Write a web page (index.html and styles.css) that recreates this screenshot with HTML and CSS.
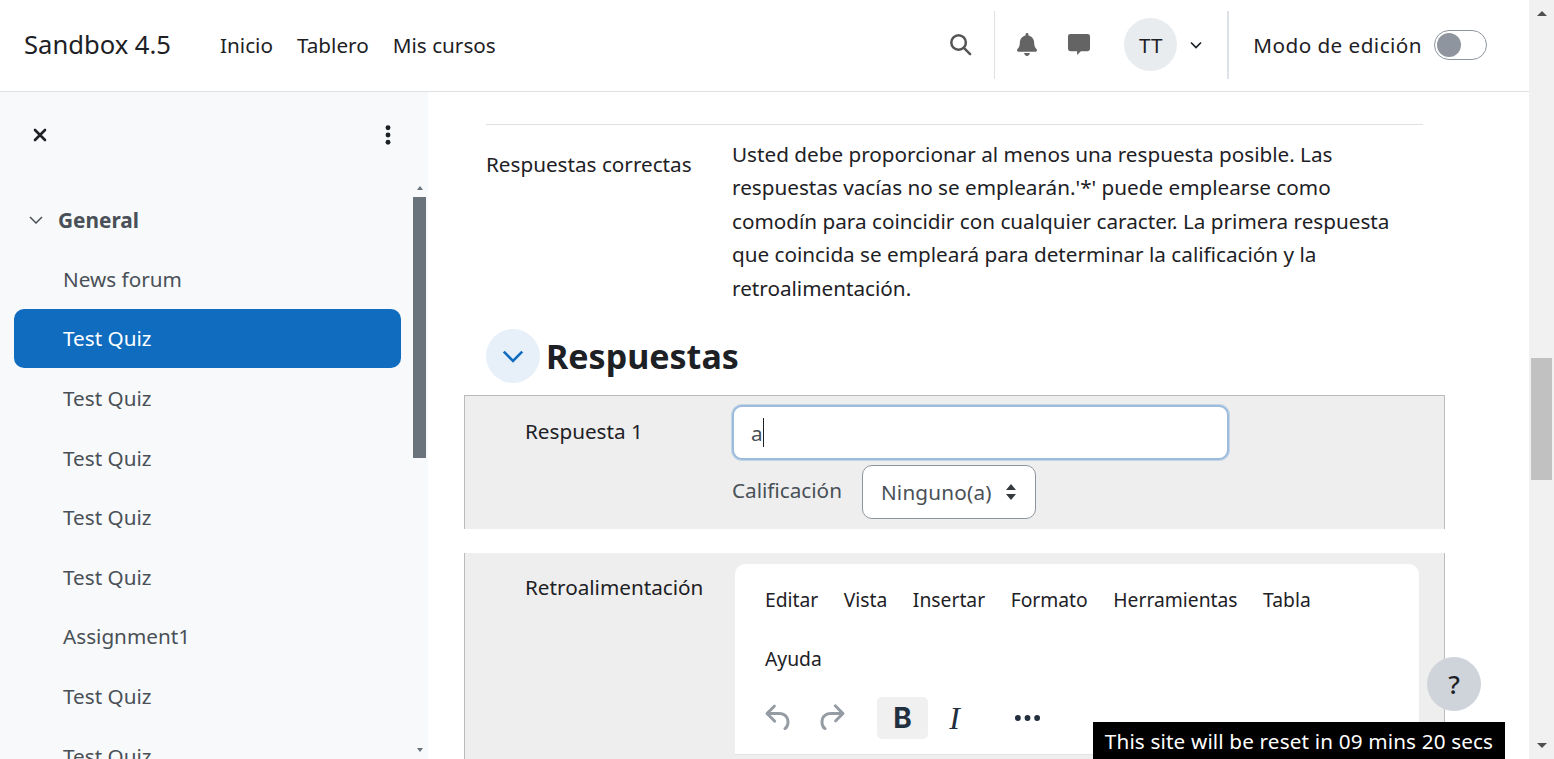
FILE: index.html
```html
<!doctype html>
<html lang="es">
 <head>
  <meta charset="UTF-8">
  <meta name="viewport" content="width=device-width, initial-scale=1.0">
  <title>Sandbox 4.5</title>
  <link rel="stylesheet" href="styles.css">
 </head>
 <body>
  <div class="page">
   <header class="topbar">
    <div class="brand">Sandbox 4.5</div>
    <nav class="mainnav">
     <a>Inicio</a>
     <a>Tablero</a>
     <a>Mis cursos</a>
    </nav>
    <div class="topbar-right">
     <svg class="icon-search" viewBox="0 0 24 24" fill="none" stroke="#555" stroke-width="2.6"><circle cx="10" cy="10" r="7.6"/><path d="M15.5 15.5 22 22" stroke-linecap="round"/></svg>
     <div class="divider first"></div>
     <svg class="icon-bell" viewBox="0 0 448 512" fill="#646464"><path d="M224 512c35.32 0 63.97-28.65 63.97-64H160.03c0 35.35 28.65 64 63.97 64zm215.39-149.71c-19.32-20.76-55.47-51.99-55.47-154.29 0-77.7-54.48-139.9-127.94-155.16V32c0-17.67-14.32-32-31.98-32s-31.98 14.33-31.98 32v20.84C118.56 68.1 64.08 130.3 64.08 208c0 102.3-36.15 133.53-55.47 154.29-6 6.45-8.66 14.16-8.61 21.71.11 16.4 12.98 32 32.1 32h383.8c19.12 0 32-15.6 32.1-32 .05-7.55-2.61-15.27-8.61-21.71z"/></svg>
     <svg class="icon-chat" viewBox="0 0 24 24" fill="#646464"><path d="M3 1h18a2.5 2.5 0 0 1 2.500 2.500v13a2.500 2.500 0 0 1-2.500 2.500h-7l-4 4v-4H3a2.500 2.500 0 0 1-2.500-2.500v-13A2.500 2.500 0 0 1 3 1z"/></svg>
     <div class="avatar">TT</div>
     <svg class="icon-caret" viewBox="0 0 12 8" fill="none" stroke="#1d2125" stroke-width="1.700"><path d="M1 1.500 6 6.500l5-5"/></svg>
     <div class="divider second"></div>
     <span class="edit-label">Modo de edición</span>
     <div class="toggle"><div class="knob"></div></div>
    </div>
   </header>

   <div class="body-row">
    <aside class="drawer">
     <div class="drawer-head">
      <svg class="icon-close" viewBox="0 0 14 14" stroke="#1d2125" stroke-width="2.600" stroke-linecap="round"><path d="M2 2l10 10M12 2 2 12"/></svg>
      <svg class="icon-dots" viewBox="0 0 6 22" fill="#1d2125"><circle cx="3" cy="3" r="2.700"/><circle cx="3" cy="11" r="2.700"/><circle cx="3" cy="19" r="2.700"/></svg>
     </div>
     <div class="drawer-body">
      <div class="course-list">
       <div class="section-title">
        <svg class="icon-sec" viewBox="0 0 14 8" fill="none" stroke="#495057" stroke-width="1.500"><path d="M1 1l6 6 6-6"/></svg>
        General
       </div>
       <div class="course-item">News forum</div>
       <div class="course-item active">Test Quiz</div>
       <div class="course-item">Test Quiz</div>
       <div class="course-item">Test Quiz</div>
       <div class="course-item">Test Quiz</div>
       <div class="course-item">Test Quiz</div>
       <div class="course-item">Assignment1</div>
       <div class="course-item">Test Quiz</div>
       <div class="course-item">Test Quiz</div>
      </div>
      <div class="drawer-scroll">
       <div class="arrow-up small"></div>
       <div class="drawer-thumb"></div>
       <div class="arrow-down small"></div>
      </div>
     </div>
    </aside>

    <main class="content">
     <hr class="rule">
     <div class="form-row info">
      <div class="form-label">Respuestas correctas</div>
      <div class="form-text">Usted debe proporcionar al menos una respuesta posible. Las respuestas vacías no se emplearán.'*' puede emplearse como comodín para coincidir con cualquier caracter. La primera respuesta que coincida se empleará para determinar la calificación y la retroalimentación.</div>
     </div>
     <div class="section-head">
      <div class="collapse-btn">
       <svg viewBox="0 0 20 12" fill="none" stroke="#0f6cbf" stroke-width="2.400"><path d="M1.500 1.500 10 10l8.500-8.500"/></svg>
      </div>
      <h2>Respuestas</h2>
     </div>
     <div class="answer-box first-box">
      <div class="box-label">Respuesta 1</div>
      <div class="box-field">
       <div class="text-input"><span>a</span><span class="caret"></span></div>
       <div class="grade-row">
        <span class="grade-label">Calificación</span>
        <div class="select-box">Ninguno(a)
         <svg viewBox="0 0 12 18" fill="#343a40"><path d="M6 1l5 6H1zM6 17l5-6H1z"/></svg>
        </div>
       </div>
      </div>
     </div>
     <div class="answer-box second-box">
      <div class="box-label">Retroalimentación</div>
      <div class="editor">
       <div class="editor-menu">
        <span>Editar</span><span>Vista</span><span>Insertar</span><span>Formato</span><span>Herramientas</span><span>Tabla</span><span>Ayuda</span>
       </div>
       <div class="editor-tools">
        <svg class="tool-svg" viewBox="0 0 24 24" fill="#969ca3"><path d="M6.400 8H12c3.700 0 6.200 2 6.800 5.100.6 2.700-.4 5.600-2.300 6.800a1 1 0 0 1-1-1.800c1.100-.6 1.800-2.700 1.400-4.600-.5-2.100-2.100-3.500-4.900-3.500H6.400l3.300 3.300a1 1 0 1 1-1.400 1.400l-5-5a1 1 0 0 1 0-1.400l5-5a1 1 0 0 1 1.400 1.400L6.400 8Z"/></svg>
        <svg class="tool-svg" viewBox="0 0 24 24" fill="#969ca3"><path d="M17.600 10H12c-2.800 0-4.400 1.400-4.900 3.500-.4 2 .3 4 1.400 4.600a1 1 0 1 1-1 1.800c-2-1.200-2.900-4.100-2.300-6.800.6-3 3-5.100 6.800-5.100h5.600l-3.300-3.300a1 1 0 1 1 1.400-1.400l5 5a1 1 0 0 1 0 1.400l-5 5a1 1 0 0 1-1.400-1.400l3.300-3.300Z"/></svg>
        <div class="tool-btn bold">B</div>
        <div class="tool-btn italic">I</div>
        <svg class="tool-more" viewBox="0 0 26 6" fill="#222f3e"><circle cx="3" cy="3" r="3"/><circle cx="13" cy="3" r="3"/><circle cx="23" cy="3" r="3"/></svg>
       </div>
      </div>
     </div>
    </main>
   </div>
  </div>

  <div class="page-scroll">
   <div class="arrow-up"></div>
   <div class="page-thumb"></div>
   <div class="arrow-down"></div>
  </div>

  <div class="help-btn">?</div>
  <div class="reset-timer">This site will be reset in 09 mins 20 secs</div>
 </body>
</html>
```

FILE: styles.css
```css
html, body {
  margin: 0;
  height: 100%;
  overflow: hidden;
}
body {
  display: flex;
  font-family: "Noto Sans", "Open Sans", sans-serif;
  font-size: 20.700px;
  color: #1d2125;
  background: #fff;
}
.page {
  width: 1529px;
  height: 759px;
  display: flex;
  flex-direction: column;
  overflow: hidden;
}

/* top bar */
.topbar {
  height: 89px;
  flex: none;
  display: flex;
  align-items: center;
  border-bottom: 1px solid #dee2e6;
  padding: 0 0 2px 24px;
}
.brand {
  font-size: 25.600px;
  width: 196px;
}
.mainnav {
  display: flex;
  gap: 24px;
}
.topbar-right {
  margin-left: auto;
  display: flex;
  align-items: center;
  padding-right: 42px;
}
.icon-search {
  width: 23px;
  height: 23px;
}
.divider {
  width: 1px;
  height: 68px;
  background: #dee2e6;
  margin-left: 22px;
}
.divider.second {
  width: 2px;
  margin-left: 25px;
}
.icon-bell {
  width: 20px;
  height: 23px;
  margin-left: 22px;
}
.icon-chat {
  width: 24px;
  height: 23px;
  margin-left: 30px;
}
.avatar {
  width: 53px;
  height: 53px;
  border-radius: 50%;
  background: #e9ecef;
  display: flex;
  align-items: center;
  justify-content: center;
  margin-left: 33px;
}
.icon-caret {
  width: 12px;
  height: 8px;
  margin-left: 13px;
}
.edit-label {
  margin-left: 24px;
  letter-spacing: .45px;
}
.toggle {
  width: 53px;
  height: 30px;
  box-sizing: border-box;
  border: 1px solid #8f959e;
  border-radius: 15px;
  margin-left: 12px;
  padding: 2px;
}
.knob {
  width: 24px;
  height: 24px;
  border-radius: 50%;
  background: #8f959e;
}

/* left drawer */
.body-row {
  flex: 1;
  display: flex;
  min-height: 0;
}
.drawer {
  width: 428px;
  flex: none;
  background: #f8f9fa;
  display: flex;
  flex-direction: column;
}
.drawer-head {
  height: 86px;
  flex: none;
  display: flex;
  align-items: center;
  justify-content: space-between;
  padding: 0 37px 0 33px;
}
.icon-close {
  width: 14px;
  height: 14px;
}
.icon-dots {
  width: 6px;
  height: 20px;
}
.drawer-body {
  flex: 1;
  display: flex;
  min-height: 0;
}
.course-list {
  width: 387px;
  margin-left: 14px;
  overflow: hidden;
  padding-top: 22px;
}
.section-title {
  height: 39px;
  display: flex;
  align-items: center;
  font-weight: 700;
  color: #495057;
  font-size: 20.800px;
}
.icon-sec {
  width: 14px;
  height: 8px;
  margin: 0 15px;
}
.course-item {
  height: 59.600px;
  display: flex;
  align-items: center;
  padding-left: 49px;
  color: #495057;
  border-radius: 10px;
}
.course-item:nth-child(2) {
  margin-top: 10px;
}
.course-item.active {
  background: #0f6cbf;
  color: #fff;
}
.drawer-scroll {
  width: 13px;
  margin-left: 12px;
  display: flex;
  flex-direction: column;
  align-items: center;
  padding-top: 8px;
}
.drawer-thumb {
  width: 13px;
  height: 261px;
  background: #6a737b;
  margin-top: 7px;
}
.arrow-up, .arrow-down {
  width: 0;
  height: 0;
  border-left: 5px solid transparent;
  border-right: 5px solid transparent;
}
.arrow-up {
  border-bottom: 5px solid #505050;
}
.arrow-down {
  border-top: 5px solid #505050;
}
.arrow-up.small {
  border-left-width: 3.500px;
  border-right-width: 3.500px;
  border-bottom: 4px solid #6a737b;
}
.arrow-down.small {
  border-left-width: 3.500px;
  border-right-width: 3.500px;
  border-top: 4px solid #6a737b;
  margin-top: 290px;
}

/* main region */
.content {
  flex: 1;
  min-width: 0;
  padding: 32px 106px 0 58px;
  overflow: hidden;
}
.rule {
  margin: 0;
  border: 0;
  border-top: 1px solid #dee2e6;
}
.form-row.info {
  display: flex;
  padding-top: 13px;
}
.form-label {
  width: 246px;
  flex: none;
  padding-top: 11px;
  line-height: 30px;
}
.form-text {
  width: 680px;
  line-height: 33.400px;
}
.section-head {
  display: flex;
  align-items: center;
  margin-top: 24px;
  gap: 6px;
}
.collapse-btn {
  width: 54px;
  height: 54px;
  border-radius: 50%;
  background: #e7f0f9;
  display: flex;
  align-items: center;
  justify-content: center;
}
.collapse-btn svg {
  width: 22px;
  height: 13px;
}
.section-head h2 {
  margin: 0;
  font-size: 34px;
  font-weight: 700;
  line-height: 54px;
}
.answer-box {
  display: flex;
  width: 981px;
  margin-left: -22px;
  box-sizing: border-box;
  background: #eee;
  border: 1px solid #bbb;
  border-bottom: 0;
  padding-left: 60px;
}
.first-box {
  height: 134px;
  margin-top: 12px;
  padding-top: 9px;
}
.second-box {
  margin-top: 24px;
  height: 300px;
  padding-top: 11px;
  border-top: 0;
}
.box-label {
  width: 207px;
  flex: none;
  padding-top: 11px;
  line-height: 30px;
}
.second-box .box-label {
  padding-top: 8px;
}
.text-input {
  width: 497px;
  height: 55px;
  box-sizing: border-box;
  background: #fff;
  border: 2px solid #9dbbdc;
  border-radius: 10px;
  box-shadow: 0 0 0 1px #c4d5e6;
  display: flex;
  align-items: center;
  padding-left: 17px;
  color: #495057;
}
.caret {
  width: 1px;
  height: 29px;
  background: #1d2125;
}
.grade-row {
  display: flex;
  align-items: center;
  gap: 20px;
  margin-top: 5px;
}
.grade-label {
  color: #495057;
  padding-bottom: 4px;
}
.select-box {
  width: 174px;
  height: 54px;
  box-sizing: border-box;
  background: #fff;
  border: 1px solid #8f959e;
  border-radius: 10px;
  display: flex;
  align-items: center;
  justify-content: space-between;
  padding: 0 18px;
  color: #495057;
  letter-spacing: .2px;
}
.select-box svg {
  width: 12px;
  height: 18px;
}
.editor {
  width: 684px;
  margin-left: 3px;
  height: 190px;
  background: #fff;
  border-radius: 10px 10px 0 0;
  border-bottom: 1px solid #e3e3e3;
  font-size: 19.300px;
}
.editor-menu {
  display: flex;
  flex-wrap: wrap;
  column-gap: 25.500px;
  padding: 6px 90px 0 30px;
}
.editor-menu span {
  height: 59px;
  line-height: 59px;
}
.editor-tools {
  display: flex;
  align-items: center;
  margin-top: 9px;
  padding-left: 25.500px;
}
.tool-svg {
  width: 36px;
  height: 36px;
  margin-right: 16px;
}
.tool-btn {
  width: 51px;
  height: 42px;
  border-radius: 5px;
  display: flex;
  align-items: center;
  justify-content: center;
  color: #222f3e;
}
.tool-btn.bold {
  background: #f0f0f0;
  font-family: Inter, "Noto Sans", sans-serif;
  font-weight: 700;
  font-size: 28px;
  margin-left: 12.500px;
}
.tool-btn.italic {
  font-family: "Liberation Serif", serif;
  font-style: italic;
  font-size: 32px;
  margin-left: 1px;
}
.tool-more {
  width: 25px;
  height: 6px;
  margin-left: 35px;
}

/* browser scrollbar */
.page-scroll {
  width: 25px;
  height: 759px;
  flex: none;
  background: #f1f1f1;
  display: flex;
  flex-direction: column;
  align-items: center;
  padding-top: 11px;
  box-sizing: border-box;
}
.page-thumb {
  width: 21px;
  height: 122px;
  background: #c1c1c1;
  margin-top: 342px;
}
.arrow-down {
  margin-top: 263px;
}

/* floating bits */
.help-btn {
  position: fixed;
  left: 1427px;
  top: 657px;
  width: 54px;
  height: 54px;
  border-radius: 50%;
  background: #ced4da;
  display: flex;
  align-items: center;
  justify-content: center;
  font-size: 26px;
  font-weight: 500;
}
.reset-timer {
  position: fixed;
  left: 1093px;
  top: 722px;
  width: 412px;
  height: 37px;
  background: #000;
  color: #fff;
  display: flex;
  align-items: center;
  justify-content: center;
  white-space: nowrap;
  letter-spacing: .15px;
}
```
